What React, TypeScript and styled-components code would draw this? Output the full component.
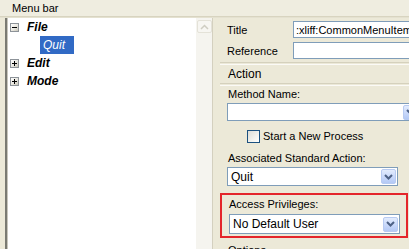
import React from 'react';
import styled, { createGlobalStyle } from 'styled-components';

const Global = createGlobalStyle`
  html, body { margin: 0; padding: 0; }
  body {
    width: 409px; height: 249px; overflow: hidden;
    background: #ece9d8;
    font-family: "Liberation Sans", Arial, sans-serif;
    font-size: 11px; color: #000;
  }
`;

const Frame = styled.div`
  width: 409px; height: 249px; overflow: hidden;
  display: flex; flex-direction: column;
  background: #ece9d8;
`;

const Header = styled.div`
  flex: none; height: 17px; padding-left: 12px;
  display: flex; align-items: center;
  background: #efede0;
  border-bottom: 1px solid #d8d4c0;
  box-sizing: border-box;
`;

const HeaderLine = styled.div`
  flex: none; height: 1px; background: #e4e1d0;
`;

const Body = styled.div`
  flex: 1; min-height: 0;
  display: flex;
`;

const LeftGap = styled.div`
  flex: none; width: 5px; background: #ece9d8;
`;

const TreePane = styled.div`
  flex: none; width: 189px;
  background: #fff;
  border-left: 2px solid #7a7a72;
  box-shadow: inset 1px 0 0 #c8c6bc;
  display: flex; flex-direction: column;
`;

const TreeRow = styled.div<{ $indent?: number }>`
  height: 18px; display: flex; align-items: center;
  padding-left: ${p => (p.$indent ?? 0) + 3}px;
`;

const Toggle = styled.span`
  width: 9px; height: 9px; box-sizing: border-box;
  border: 1px solid #8d9399;
  background: linear-gradient(135deg, #ffffff 0%, #e6e4dc 60%, #c9c6b8 100%);
  position: relative; flex: none;
  &::before {
    content: ''; position: absolute; left: 1px; top: 3px; width: 5px; height: 1px; background: #000;
  }
`;

const PlusToggle = styled(Toggle)`
  &::after {
    content: ''; position: absolute; left: 3px; top: 1px; width: 1px; height: 5px; background: #000;
  }
`;

const NodeLabel = styled.span`
  margin-left: 8px;
  font-size: 12px; font-weight: bold; font-style: italic;
`;

const Selected = styled.span`
  height: 18px; padding: 0 4px 0 3px; width: 27px;
  display: flex; align-items: center;
  background: #316ac5; color: #fff;
  font-size: 12px; font-style: italic;
`;

const Scrollbar = styled.div`
  flex: none; width: 16px;
  background: #f5f4ef;
  border-right: 1px solid #d4d0bf;
  padding-top: 2px;
  display: flex; flex-direction: column; align-items: center;
`;

const ScrollButton = styled.div`
  width: 15px; height: 13px; box-sizing: border-box;
  border: 1px solid #e4e2d8; border-radius: 2px;
  background: #f7f6f2;
  display: flex; align-items: center; justify-content: center;
`;

const RightPane = styled.div`
  flex: 1; min-width: 0; overflow: hidden;
  padding-left: 7px;
  display: flex; flex-direction: column;
`;

const Inner = styled.div`
  width: 260px;
  display: flex; flex-direction: column;
`;

const FieldRow = styled.div<{ $top: number }>`
  margin-top: ${p => p.$top}px;
  padding-left: 7px;
  display: flex; align-items: center;
  height: 17px;
`;

const FieldLabel = styled.span`
  width: 66px; flex: none;
`;

const TextInput = styled.div`
  flex: 1; height: 17px; box-sizing: border-box;
  border: 1px solid #7f9db9; background: #fff;
  padding-left: 2px; display: flex; align-items: center;
  white-space: nowrap; overflow: hidden;
`;

const Etched = styled.div<{ $top: number }>`
  margin-top: ${p => p.$top}px;
  height: 1px; border-top: 1px solid #d5d1bd; border-bottom: 1px solid #fbfaf6;
`;

const SectionTitle = styled.div`
  height: 18px; padding-left: 8px;
  display: flex; align-items: center;
  font-size: 12px;
`;

const Label = styled.div<{ $top?: number }>`
  margin-top: ${p => p.$top ?? 0}px;
  height: 16px; padding-left: 8px;
  display: flex; align-items: center;
`;

const Select = styled.div<{ $width: number; $top?: number; $h?: number }>`
  margin-top: ${p => p.$top ?? 0}px;
  margin-left: 7px;
  width: ${p => p.$width}px; height: ${p => p.$h ?? 19}px; box-sizing: border-box;
  border: 1px solid #7f9db9; background: #fff;
  display: flex; align-items: center; justify-content: space-between;
  padding: 0 1px 0 3px;
  font-size: 12px;
`;

const DropButton = styled.div`
  width: 15px; height: 15px; box-sizing: border-box;
  border: 1px solid #b8cbf2; border-radius: 2px;
  background: linear-gradient(180deg, #e3ecfd 0%, #c8d8fa 55%, #b4c9f5 100%);
  display: flex; align-items: center; justify-content: center;
`;

const CheckRow = styled.div`
  margin-top: 8px; height: 14px;
  padding-left: 27px;
  display: flex; align-items: center;
`;

const CheckBox = styled.span`
  width: 13px; height: 13px; box-sizing: border-box;
  border: 1px solid #1c5180;
  background: linear-gradient(135deg, #dcdcd6 0%, #f2f2ee 60%, #ffffff 100%);
  margin-right: 3px; flex: none;
`;

const Highlight = styled.div`
  margin-top: 7px;
  width: 188px; box-sizing: border-box;
  border: 2px solid #e4262b;
  padding: 0 6px 2px 0;
  display: flex; flex-direction: column;
`;

const HLabel = styled.div`
  height: 17px; padding-left: 7px;
  display: flex; align-items: center;
`;

const Chevron = () => (
  <svg width="9" height="6" viewBox="0 0 9 6">
    <path d="M1 1 L4.5 4.5 L8 1" fill="none" stroke="#4d6185" strokeWidth="2" />
  </svg>
);

const UpChevron = () => (
  <svg width="9" height="6" viewBox="0 0 9 6">
    <path d="M1 5 L4.5 1.5 L8 5" fill="none" stroke="#cfcdc2" strokeWidth="1.5" />
  </svg>
);

export default function App() {
  return (
    <Frame>
      <Global />
      <Header>Menu bar</Header>
      <HeaderLine />
      <Body>
        <LeftGap />
        <TreePane>
          <TreeRow>
            <Toggle />
            <NodeLabel>File</NodeLabel>
          </TreeRow>
          <TreeRow $indent={30}>
            <Selected>Quit</Selected>
          </TreeRow>
          <TreeRow>
            <PlusToggle />
            <NodeLabel>Edit</NodeLabel>
          </TreeRow>
          <TreeRow>
            <PlusToggle />
            <NodeLabel>Mode</NodeLabel>
          </TreeRow>
        </TreePane>
        <Scrollbar>
          <ScrollButton><UpChevron /></ScrollButton>
        </Scrollbar>
        <RightPane>
          <Inner>
            <FieldRow $top={3}>
              <FieldLabel>Title</FieldLabel>
              <TextInput>:xliff:CommonMenuItem</TextInput>
            </FieldRow>
            <FieldRow $top={4}>
              <FieldLabel>Reference</FieldLabel>
              <TextInput />
            </FieldRow>
            <Etched $top={3} />
            <SectionTitle>Action</SectionTitle>
            <Etched $top={0} />
            <Label>Method Name:</Label>
            <Select $width={193} $top={1} $h={18}>
              <span />
              <DropButton><Chevron /></DropButton>
            </Select>
            <CheckRow>
              <CheckBox />
              <span>Start a New Process</span>
            </CheckRow>
            <Label $top={7}>Associated Standard Action:</Label>
            <Select $width={171} $top={1}>
              <span>Quit</span>
              <DropButton><Chevron /></DropButton>
            </Select>
            <Highlight>
              <HLabel>Access Privileges:</HLabel>
              <Select $width={171} $top={2} $h={20}>
                <span>No Default User</span>
                <DropButton><Chevron /></DropButton>
              </Select>
            </Highlight>
            <Label $top={4}>Options</Label>
          </Inner>
        </RightPane>
      </Body>
    </Frame>
  );
}
